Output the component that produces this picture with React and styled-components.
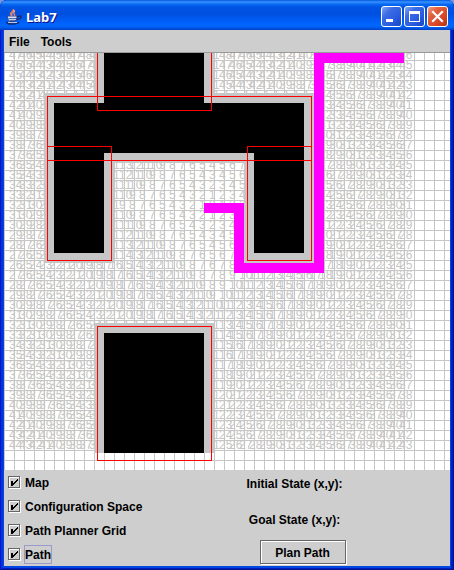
import React from "react";
import styled, { createGlobalStyle, css } from "styled-components";

const GlobalStyle = createGlobalStyle`
  * { box-sizing: border-box; }
  body {
    margin: 0;
    background: #7a96df;
    font-family: "Liberation Sans", Arial, sans-serif;
  }
`;

const Window = styled.div`
  display: flex;
  flex-direction: column;
  min-height: 100vh;
  background: #0046e0;
  border-radius: 7px 7px 0 0;
  box-shadow: inset 1px 0 #0019cf, inset -1px -1px #00138c, inset 3px 0 #0831d9,
    inset -3px -2px #001dc0;
`;

const TitleBar = styled.header`
  display: flex;
  align-items: center;
  gap: 4px;
  height: 30px;
  padding: 3px 6px 0;
  border-radius: 7px 7px 0 0;
  background: linear-gradient(
    to bottom,
    #0058e0 0,
    #3a93ff 2px,
    #0a6cf5 4px,
    #0054e3 7px,
    #0050e0 14px,
    #005cf5 20px,
    #0066ff 25px,
    #0060f8 27px,
    #0040c0 30px
  );
`;

const Title = styled.h1`
  flex: 1;
  margin: 0;
  color: #fff;
  font: bold 13px/18px "Noto Sans", "Open Sans", sans-serif;
  text-shadow: 1px 1px #0f1089;
`;

const TitleButtons = styled.div`
  display: flex;
  gap: 2px;
`;

const TitleButton = styled.button`
  width: 21px;
  height: 21px;
  padding: 0;
  border: 1px solid #fff;
  border-radius: 3px;
  background: ${(p) =>
    p.$danger
      ? "linear-gradient(135deg, #f0a088 0, #e2603c 30%, #d8482a 65%, #b83210 100%)"
      : "linear-gradient(135deg, #84a8f4 0, #3c6ce4 30%, #2a5ce0 65%, #1444c0 100%)"};

  svg { display: block; }
`;

const Client = styled.main`
  display: flex;
  flex: 1;
  flex-direction: column;
  margin: 0 4px 4px;
  background: #cecece;
`;

const MenuBar = styled.nav`
  display: flex;
  gap: 11px;
  height: 23px;
  padding: 0 5px;
  border-bottom: 1px solid #999;
`;

const controlFont = css`
  color: #000;
  font: bold 12px/16px "Liberation Sans", Arial, sans-serif;
`;

const MenuItem = styled.button`
  ${controlFont}
  padding: 1px 0 0;
  border: 0;
  background: none;
`;

const Canvas = styled.svg`
  display: block;
  width: 100%;
  height: 417px;
  background: #fff;
  font: 12px "Liberation Sans", Arial, sans-serif;
`;

const Controls = styled.section`
  display: grid;
  grid-template-columns: 155px 1fr;
  flex: 1;
  padding: 0 8px 0 4px;
`;

const Options = styled.div`
  display: flex;
  flex-direction: column;
`;

const Option = styled.label`
  ${controlFont}
  display: flex;
  align-items: center;
  gap: 3px;
  height: 24px;
`;

const CheckFrame = styled.span`
  position: relative;
  width: 13px;
  height: 13px;

  svg {
    position: absolute;
    inset: 0;
    pointer-events: none;
    visibility: hidden;
  }
  input:checked + svg { visibility: visible; }
`;

const CheckInput = styled.input`
  display: block;
  appearance: none;
  width: 12px;
  height: 12px;
  margin: 0;
  border: 1px solid #666;
  box-shadow: inset 1px 1px #fff, 1px 1px #fff;
`;

const OptionText = styled.span`
  padding-top: 1px;
  border: 1px solid ${(p) => (p.$focused ? "#9999cc" : "transparent")};
`;

const Planner = styled.div`
  display: flex;
  flex-direction: column;
  align-items: center;
  gap: 20px;
  padding-top: 6px;
`;

const StateRow = styled.div`
  ${controlFont}
  display: flex;
`;

const StateValue = styled.output`
  width: 16px;
`;

const PlanButton = styled.button`
  ${controlFont}
  width: 86px;
  height: 24px;
  margin-top: -8px;
  padding: 2px 0 0;
  border: 1px solid #666;
  background: none;
  box-shadow: inset 1px 1px #fff, 1px 1px #fff;
`;

const CELL = 10;
const SIZE = 40;
const GOAL = [20, 15];

// Blocked cells as [first column, first row, last column, last row].
const BLOCKED = [
  [9, 0, 20, 4],
  [4, 4, 30, 10],
  [4, 11, 10, 20],
  [24, 11, 30, 20],
  [9, 27, 20, 39],
];

// Obstacles as [x, y, width, height].
const OBSTACLES = [
  [100, -50, 100, 100],
  [50, 50, 250, 50],
  [50, 100, 50, 100],
  [250, 100, 50, 100],
  [100, 280, 100, 120],
];
const MARGIN = 7;

// Stretches of the planned path, in cells: [column, row, columns, rows].
const PATH = [
  [20, 15, 4, 1],
  [23, 15, 1, 7],
  [23, 21, 9, 1],
  [31, 0, 1, 22],
  [31, 0, 9, 1],
];

function planGrid() {
  const grid = Array.from({ length: SIZE }, () => Array(SIZE).fill(null));
  BLOCKED.forEach(([c0, r0, c1, r1]) => {
    for (let r = r0; r <= r1; r++) for (let c = c0; c <= c1; c++) grid[r][c] = -1;
  });
  grid[GOAL[1]][GOAL[0]] = 0;
  const queue = [GOAL];
  for (let i = 0; i < queue.length; i++) {
    const [c, r] = queue[i];
    [[1, 0], [-1, 0], [0, 1], [0, -1]].forEach(([dc, dr]) => {
      const nc = c + dc;
      const nr = r + dr;
      if (nc < 0 || nr < 0 || nc >= SIZE || nr >= SIZE || grid[nr][nc] !== null) return;
      grid[nr][nc] = grid[r][c] + 1;
      queue.push([nc, nr]);
    });
  }
  return grid;
}

const GRID = planGrid();

function WorldView({ show }) {
  return (
    <Canvas role="img" aria-label="Map with planned path" shapeRendering="crispEdges">
      <defs>
        <pattern id="cells" width="10" height="10" y="7" patternUnits="userSpaceOnUse">
          <path d="M0 0h10v1H1v9H0z" fill="#c6c6c6" />
        </pattern>
      </defs>
      <rect width="100%" height="100%" fill="url(#cells)" />
      {show.grid && (
        <g fill="#c6c6c6">
          {BLOCKED.map(([c0, r0, c1, r1]) => (
            <rect
              key={`${c0}-${r0}`}
              x={c0 * CELL}
              y={r0 * CELL}
              width={(c1 - c0 + 1) * CELL}
              height={(r1 - r0 + 1) * CELL}
            />
          ))}
          {GRID.map((row, r) =>
            row.map((value, c) => (
              <text key={`${c}-${r}`} x={c * CELL + 5} y={r * CELL + 6}>
                {value}
              </text>
            ))
          )}
        </g>
      )}
      {show.map &&
        OBSTACLES.map(([x, y, w, h]) => (
          <rect key={`${x}-${y}`} x={x} y={y} width={w} height={h} />
        ))}
      {show.space &&
        OBSTACLES.map(([x, y, w, h]) => (
          <rect
            key={`${x}-${y}`}
            x={x - MARGIN + 0.5}
            y={y - MARGIN + 0.5}
            width={w + 2 * MARGIN}
            height={h + 2 * MARGIN}
            fill="none"
            stroke="#f00"
          />
        ))}
      {show.path &&
        PATH.map(([c, r, w, h], i) => (
          <rect key={i} x={c * CELL} y={r * CELL} width={w * CELL} height={h * CELL} fill="#f0f" />
        ))}
    </Canvas>
  );
}

function JavaCup() {
  return (
    <svg width="16" height="16" viewBox="0 0 16 16" fill="none" aria-hidden="true">
      <path d="M7 0C9 2 4 3 4.500 5S6 6 6 7M9 2C6 4 9 4.500 8.500 7" stroke="#f07850" strokeWidth="1.500" />
      <path d="M6.500 3.500q-1 1-.5 2M8 1v2" stroke="#ffd0b8" />
      <path d="M1.500 7.500h9.500q0 4-2.500 5H4q-2.500-1-2.500-5z" fill="#c4d0ec" stroke="#26408c" />
      <path d="M2 8h8.500" stroke="#f0f4ff" />
      <path d="M11 8q4-2 4 0t-4.500 2.500" stroke="#1c2c70" strokeWidth="1.500" />
      <path d="M3 9.500h7M4 11.500h5" stroke="#536cae" />
      <path d="M0 12.500q1 2.500 6.500 2.500T13 13" stroke="#17286c" strokeWidth="1.500" />
      <path d="M2 13.500h9" stroke="#b8c8e8" />
    </svg>
  );
}

const OPTIONS = [
  ["map", "Map"],
  ["space", "Configuration Space"],
  ["grid", "Path Planner Grid"],
  ["path", "Path"],
];

export default function App() {
  const [show, setShow] = React.useState({ map: true, space: true, grid: true, path: true });
  const [focused, setFocused] = React.useState("path");

  return (
    <>
      <GlobalStyle />
      <Window>
        <TitleBar>
          <JavaCup />
          <Title>Lab7</Title>
          <TitleButtons>
            <TitleButton aria-label="Minimize">
              <svg width="19" height="19" aria-hidden="true">
                <path d="M4 12h7v3H4z" fill="#fff" />
              </svg>
            </TitleButton>
            <TitleButton aria-label="Maximize">
              <svg width="19" height="19" aria-hidden="true">
                <path d="M4 4h11v11H4zM5 7v7h9V7z" fill="#fff" fillRule="evenodd" />
              </svg>
            </TitleButton>
            <TitleButton $danger aria-label="Close">
              <svg width="19" height="19" aria-hidden="true">
                <path d="M5 5l9 9M14 5l-9 9" stroke="#fff" strokeWidth="2.200" strokeLinecap="square" />
              </svg>
            </TitleButton>
          </TitleButtons>
        </TitleBar>
        <Client>
          <MenuBar>
            <MenuItem>File</MenuItem>
            <MenuItem>Tools</MenuItem>
          </MenuBar>
          <WorldView show={show} />
          <Controls>
            <Options>
              {OPTIONS.map(([id, text]) => (
                <Option key={id}>
                  <CheckFrame>
                    <CheckInput
                      type="checkbox"
                      checked={show[id]}
                      onFocus={() => setFocused(id)}
                      onChange={(e) => setShow({ ...show, [id]: e.target.checked })}
                    />
                    <svg width="13" height="13" shapeRendering="crispEdges" aria-hidden="true">
                      <path d="M3 5h2v2h1V6h1V5h1V4h1V3h1v2H9v1H8v1H7v1H6v1H5v1H3z" />
                    </svg>
                  </CheckFrame>
                  <OptionText $focused={focused === id}>{text}</OptionText>
                </Option>
              ))}
            </Options>
            <Planner>
              <StateRow>
                <span>Initial State (x,y):</span>
                <StateValue />
              </StateRow>
              <StateRow>
                <span>Goal State (x,y):</span>
                <StateValue />
              </StateRow>
              <PlanButton>Plan Path</PlanButton>
            </Planner>
          </Controls>
        </Client>
      </Window>
    </>
  );
}
